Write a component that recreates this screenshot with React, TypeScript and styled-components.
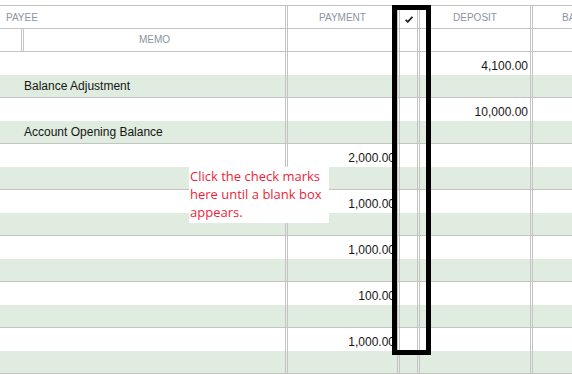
import React from "react";
import styled, { createGlobalStyle } from "styled-components";

const c = {
  line: "#c4c4c4",
  green: "#dfecdf",
  head: "#8b94a0",
  text: "#161616",
  red: "#ee1f3b",
};

const cols = "286px 111px 19px 112px 90px";

const Global = createGlobalStyle`
  html, body {
    margin: 0;
    padding: 0;
    background: #fff;
    overflow: hidden;
  }
  body {
    font-family: "Liberation Sans", Arial, sans-serif;
  }
`;

const Page = styled.div`
  position: relative;
  width: 572px;
  height: 374px;
  overflow: hidden;
  padding-top: 5px;
  box-sizing: border-box;
`;

const Register = styled.div`
  width: 640px;
  border-top: 1px solid ${c.line};
`;

const Row = styled.div<{ $green?: boolean; $h: number; $line?: boolean }>`
  display: grid;
  grid-template-columns: ${cols};
  column-gap: 1px;
  height: ${(p) => p.$h}px;
  background: ${(p) => (p.$green ? c.green : "#fff")};
  border-bottom: ${(p) => (p.$line ? `1px solid ${c.line}` : "none")};
`;

const Cell = styled.div<{ $first?: boolean }>`
  border-left: ${(p) => (p.$first ? "none" : `1px solid ${c.line}`)};
  border-right: 1px solid ${c.line};
  min-width: 0;
  overflow: hidden;
  white-space: nowrap;
`;

const HeadCell = styled(Cell)<{ $indent?: number }>`
  font-size: 10px;
  line-height: 23px;
  color: ${c.head};
  text-align: ${(p) => (p.$indent !== undefined ? "left" : "center")};
  padding-left: ${(p) => p.$indent ?? 0}px;
`;

const Split = styled.div`
  display: grid;
  grid-template-columns: 22px 1fr;
  column-gap: 1px;
  border-right: 1px solid ${c.line};
`;

const Stub = styled.div`
  border-right: 1px solid ${c.line};
`;

const MemoHead = styled.div`
  border-left: 1px solid ${c.line};
  font-size: 10px;
  line-height: 22px;
  color: ${c.head};
  text-align: center;
`;

const Amount = styled(Cell)`
  font-size: 12px;
  line-height: 15px;
  padding: 7px 2px 0 0;
  text-align: right;
  color: ${c.text};
`;

const Memo = styled(Cell)`
  font-size: 12px;
  line-height: 15px;
  padding: 4px 0 0 24px;
  color: ${c.text};
`;

const Tick = styled.svg`
  display: block;
  margin: 10px auto 0;
`;

const Callout = styled.div`
  position: absolute;
  left: 189px;
  top: 167px;
  width: 140px;
  height: 56px;
  box-sizing: border-box;
  background: #fff;
  padding: 0 0 0 1px;
  font-family: "Open Sans", "Noto Sans", sans-serif;
  font-size: 13px;
  line-height: 18px;
  color: ${c.red};
`;

const Highlight = styled.div`
  position: absolute;
  left: 392px;
  top: 5px;
  width: 39px;
  height: 350px;
  box-sizing: border-box;
  border: 5px solid #000;
`;

type Tx = { payment?: string; deposit?: string; memo?: string };

const txs: Tx[] = [
  { deposit: "4,100.00", memo: "Balance Adjustment" },
  { deposit: "10,000.00", memo: "Account Opening Balance" },
  { payment: "2,000.00" },
  { payment: "1,000.00" },
  { payment: "1,000.00" },
  { payment: "100.00" },
  { payment: "1,000.00" },
];

const Transaction = ({ tx }: { tx: Tx }) => (
  <>
    <Row $h={23}>
      <Cell $first />
      <Amount>{tx.payment}</Amount>
      <Cell />
      <Amount>{tx.deposit}</Amount>
      <Cell />
    </Row>
    <Row $h={22} $green $line>
      <Memo $first>{tx.memo}</Memo>
      <Cell />
      <Cell />
      <Cell />
      <Cell />
    </Row>
  </>
);

const App = () => {
  return (
    <Page>
      <Global />
      <Register>
        <Row $h={22} $line>
          <HeadCell $first $indent={6}>
            PAYEE
          </HeadCell>
          <HeadCell>PAYMENT</HeadCell>
          <HeadCell>
            <Tick width="8" height="7" viewBox="0 0 8 7">
              <path d="M0.6 3.8 L2.8 5.9 L7.4 0.8" fill="none" stroke="#222" strokeWidth="1.7" />
            </Tick>
          </HeadCell>
          <HeadCell>DEPOSIT</HeadCell>
          <HeadCell $indent={29}>BALANCE</HeadCell>
        </Row>
        <Row $h={22} $line>
          <Split>
            <Stub />
            <MemoHead>MEMO</MemoHead>
          </Split>
          <Cell />
          <Cell />
          <Cell />
          <Cell />
        </Row>
        {txs.map((tx, i) => (
          <Transaction key={i} tx={tx} />
        ))}
      </Register>
      <Callout>Click the check marks here until a blank box appears.</Callout>
      <Highlight />
    </Page>
  );
};

export default App;
